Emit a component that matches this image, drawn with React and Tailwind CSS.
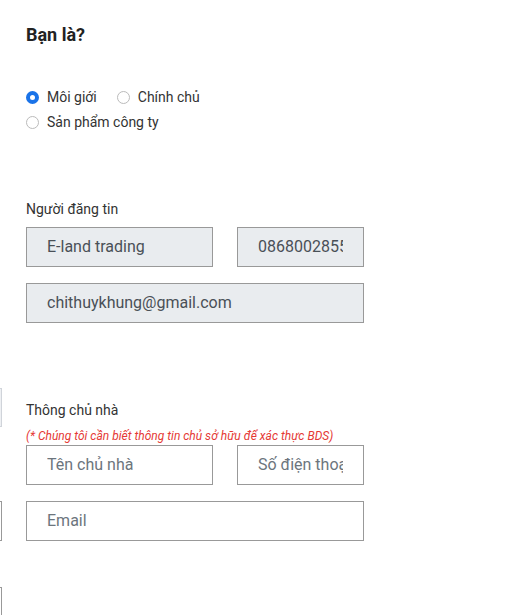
import React from "react";

function Radio({ checked, label }) {
  return (
    <label className="flex items-center gap-[8px] text-[14px] text-[#333]">
      {checked ? (
        <span className="w-[13px] h-[13px] rounded-full border-[4px] border-[#1a73e8] bg-white box-border" />
      ) : (
        <span className="w-[13px] h-[13px] rounded-full border border-[#bbb] bg-white box-border" />
      )}
      <span>{label}</span>
    </label>
  );
}

function Box({ children, filled, className = "" }) {
  return (
    <div
      className={
        "h-[40px] border border-[#999] flex items-center px-[20px] text-[16px] " +
        (filled ? "bg-[#e9ecef] text-[#495057] " : "bg-white text-[#6c757d] ") +
        className
      }
    >
      <div className="w-full overflow-hidden whitespace-nowrap">{children}</div>
    </div>
  );
}

export default function App() {
  return (
    <div
      className="relative w-[517px] h-[615px] bg-white overflow-hidden"
      style={{ fontFamily: "Roboto, 'Liberation Sans', sans-serif" }}
    >
      {/* fragments of neighbouring content cut off at the left edge */}
      <div className="absolute left-[-40px] top-[388px] w-[42px] h-[39px] bg-[#eef0f3] border border-[#d0d4da]" />
      <div className="absolute left-[-40px] top-[501px] w-[42px] h-[40px] border border-[#999]" />
      <div className="absolute left-[-40px] top-[587px] w-[42px] h-[40px] border border-[#999]" />

      <div className="pl-[26px] pt-[24px] w-[364px]">
        <h2 className="text-[18px] font-bold text-[#222] leading-[22px]">Bạn là?</h2>

        <div className="mt-[42px] flex flex-col gap-[7px]">
          <div className="flex gap-[20px] h-[18px] items-center">
            <Radio checked label="Môi giới" />
            <Radio label="Chính chủ" />
          </div>
          <div className="flex h-[18px] items-center">
            <Radio label="Sản phẩm công ty" />
          </div>
        </div>

        <div className="mt-[69px] text-[14px] text-[#333] leading-[18px]">Người đăng tin</div>
        <div className="mt-[9px] flex gap-[24px]">
          <Box filled className="w-[187px]">E-land trading</Box>
          <Box filled className="w-[127px]">0868002855</Box>
        </div>
        <Box filled className="mt-[16px] w-[338px]">chithuykhung@gmail.com</Box>

        <div className="mt-[78px] text-[14px] text-[#333] leading-[18px]">Thông chủ nhà</div>
        <div className="mt-[10px] text-[12px] italic text-[#e53935] leading-[14px] whitespace-nowrap">
          (* Chúng tôi cần biết thông tin chủ sở hữu để xác thực BDS)
        </div>
        <div className="mt-[2px] flex gap-[24px]">
          <Box className="w-[187px]">Tên chủ nhà</Box>
          <Box className="w-[127px]">Số điện thoại</Box>
        </div>
        <Box className="mt-[16px] w-[338px]">Email</Box>
      </div>
    </div>
  );
}
